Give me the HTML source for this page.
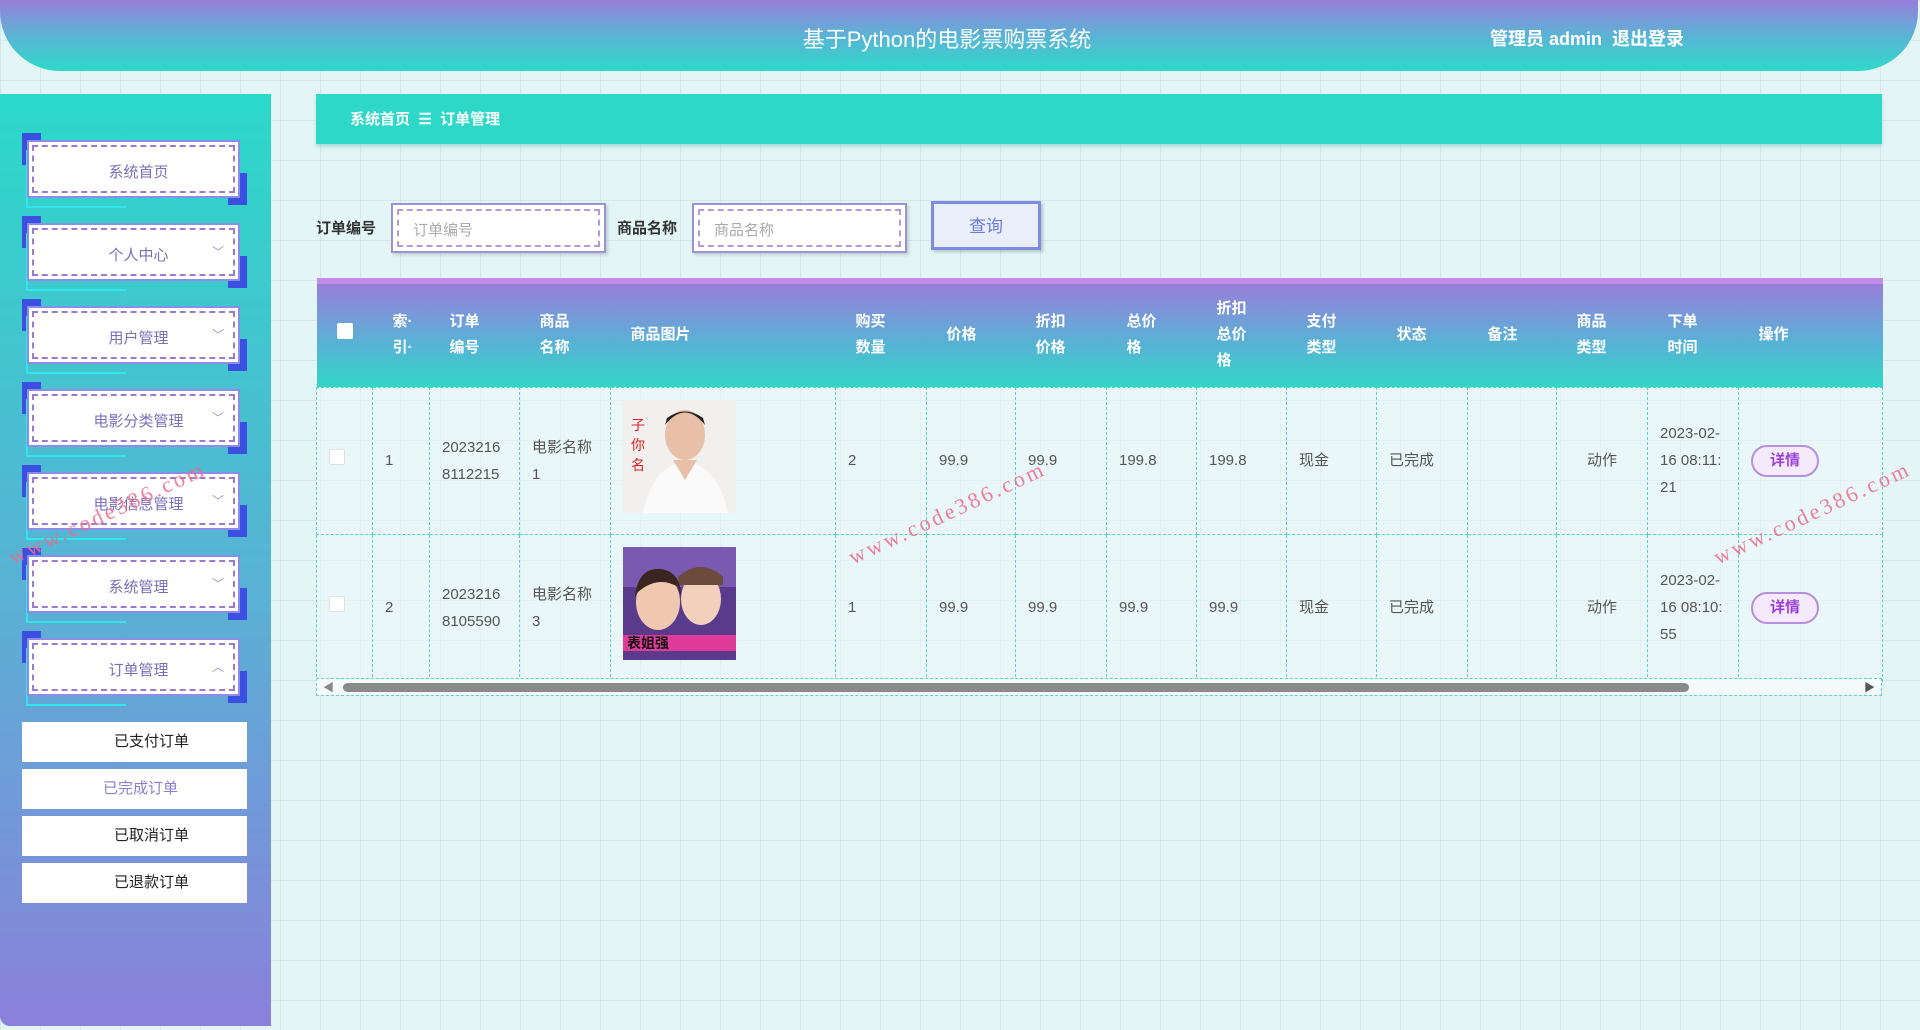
<!DOCTYPE html>
<html><head><meta charset="utf-8">
<style>
*{margin:0;padding:0;box-sizing:border-box}
body{width:1920px;height:1030px;overflow:hidden;font-family:"Liberation Sans","Noto Sans CJK SC",sans-serif;
background:#e3f5f5;
background-image:linear-gradient(rgba(180,210,215,.35) 1px,transparent 1px),linear-gradient(90deg,rgba(180,210,215,.35) 1px,transparent 1px);
background-size:40px 40px;position:relative}
.hdr{position:absolute;left:0;top:0;width:1918px;height:71px;border-radius:0 0 60px 60px;
background:linear-gradient(180deg,#9a7edb 0%,#5bb3d6 50%,#2fd9c9 100%)}
.hdr .t{position:absolute;left:0;width:1894px;text-align:center;top:22px;color:#fff;font-size:22px}
.hdr .u{position:absolute;left:1490px;top:25px;color:#fff;font-size:18px;font-weight:bold}
.side{position:absolute;left:0;top:94px;width:271px;height:932px;background:linear-gradient(180deg,#2bd9c9 0%,#5ab0d5 55%,#8b80db 100%);border-radius:0 0 0 10px}
.mi{position:absolute;left:27px;width:213px;height:58px;background:#fff;border:2px solid #8b8de8}
.mi:after{content:"";position:absolute;left:3px;top:3px;right:3px;bottom:3px;border:2px dashed #9a7ccf}
.mi span{position:absolute;left:10px;right:0;top:19px;text-align:center;color:#7b6fb8;font-size:15px}
.mi i{position:absolute;right:14px;top:18px;color:#9a8fc8;font-style:normal;font-size:12px}
.ca{position:absolute;width:19px;height:32px;background:#3b4fe0}
.cl{position:absolute;border:2px solid #33e6ee}
.sub{position:absolute;left:22px;width:225px;height:40px;background:#fff;text-align:center;line-height:40px;font-size:15px;color:#222}
.bc{position:absolute;left:316px;top:94px;width:1566px;height:50px;background:#2dd8c8;box-shadow:0 3px 3px rgba(120,200,200,.5);color:#fff;font-size:15px;font-weight:bold;line-height:52px;padding-left:34px}
.lbl{position:absolute;top:217px;font-size:15px;color:#333;font-weight:bold}
.inp{position:absolute;top:203px;width:215px;height:50px;background:#fff;border:2px solid #9b92d8;box-shadow:2px 2px 3px rgba(0,0,0,.15)}
.inp:after{content:"";position:absolute;left:4px;top:4px;right:4px;bottom:4px;border:2px dashed #b49ad8}
.inp span{position:absolute;left:20px;top:14px;color:#aaa;font-size:15px}
.btn{position:absolute;left:931px;top:201px;width:110px;height:49px;background:#e8eefa;border:3px solid #7d8ce0;color:#6d7bd8;font-size:17px;text-align:center;line-height:45px;box-shadow:2px 2px 3px rgba(0,0,0,.2)}
table{position:absolute;left:316px;top:278px;border-collapse:collapse;table-layout:fixed;width:1566px}
th{height:106px;color:#fff;font-size:15px;font-weight:bold;line-height:26px;text-align:left;padding-left:20px;background:linear-gradient(180deg,#9a7edb,#5bb0d6 55%,#30d6c9);border-top:6px solid #c18de8}
td{height:147px;border:1px dashed #5fd0c8;font-size:15px;color:#555;padding-left:12px;line-height:27px;background:rgba(240,250,252,.5)}
.cb{display:inline-block;width:16px;height:16px;background:#fff;border-radius:2px;border:1px solid #e0e0e0}
.img{width:113px;height:113px}
.dt{display:inline-block;width:68px;height:32px;border:2px solid #b590de;border-radius:16px;background:#f4eafc;color:#9a3fd8;font-weight:bold;text-align:center;line-height:28px}
.sb{position:absolute;left:316px;top:678px;width:1566px;height:18px;border:1px dashed #5fd0c8;background:#f5fbfb}
.sb .th{position:absolute;left:26px;top:4px;width:1346px;height:9px;border-radius:5px;background:#8a8a8a}
.wm{position:absolute;color:#f06a8a;font-family:"Liberation Serif",serif;font-size:22px;transform:rotate(-25deg);letter-spacing:3px;white-space:nowrap;opacity:.85}
</style></head><body>
<div class="hdr"><div class="t">基于Python的电影票购票系统</div><div class="u">管理员 admin &nbsp;退出登录</div></div>
<div class="side"></div>

<div class="ca" style="left:22px;top:133px"></div><div class="ca" style="left:228px;top:173px"></div><div class="cl" style="left:26px;top:150px;width:100px;height:58px;border-top:none;border-right:none"></div><div class="mi" style="top:140px"><span>系统首页</span></div>
<div class="ca" style="left:22px;top:216px"></div><div class="ca" style="left:228px;top:256px"></div><div class="cl" style="left:26px;top:233px;width:100px;height:58px;border-top:none;border-right:none"></div><div class="mi" style="top:223px"><span>个人中心</span><i>﹀</i></div>
<div class="ca" style="left:22px;top:299px"></div><div class="ca" style="left:228px;top:339px"></div><div class="cl" style="left:26px;top:316px;width:100px;height:58px;border-top:none;border-right:none"></div><div class="mi" style="top:306px"><span>用户管理</span><i>﹀</i></div>
<div class="ca" style="left:22px;top:382px"></div><div class="ca" style="left:228px;top:422px"></div><div class="cl" style="left:26px;top:399px;width:100px;height:58px;border-top:none;border-right:none"></div><div class="mi" style="top:389px"><span>电影分类管理</span><i>﹀</i></div>
<div class="ca" style="left:22px;top:465px"></div><div class="ca" style="left:228px;top:505px"></div><div class="cl" style="left:26px;top:482px;width:100px;height:58px;border-top:none;border-right:none"></div><div class="mi" style="top:472px"><span>电影信息管理</span><i>﹀</i></div>
<div class="ca" style="left:22px;top:548px"></div><div class="ca" style="left:228px;top:588px"></div><div class="cl" style="left:26px;top:565px;width:100px;height:58px;border-top:none;border-right:none"></div><div class="mi" style="top:555px"><span>系统管理</span><i>﹀</i></div>
<div class="ca" style="left:22px;top:631px"></div><div class="ca" style="left:228px;top:671px"></div><div class="cl" style="left:26px;top:648px;width:100px;height:58px;border-top:none;border-right:none"></div><div class="mi" style="top:638px"><span>订单管理</span><i>︿</i></div>
<div class="sub" style="top:722px;padding-left:34px">已支付订单</div>
<div class="sub" style="top:769px;color:#8a7fcf;padding-left:12px">已完成订单</div>
<div class="sub" style="top:816px;padding-left:34px">已取消订单</div>
<div class="sub" style="top:863px;padding-left:34px">已退款订单</div>

<div class="bc">系统首页 &nbsp;☰ &nbsp;订单管理</div>
<div class="lbl" style="left:316px">订单编号</div>
<div class="inp" style="left:391px"><span>订单编号</span></div>
<div class="lbl" style="left:617px">商品名称</div>
<div class="inp" style="left:692px"><span>商品名称</span></div>
<div class="btn">查询</div>

<table>
<colgroup><col style="width:56px"><col style="width:57px"><col style="width:90px"><col style="width:91px"><col style="width:225px"><col style="width:91px"><col style="width:89px"><col style="width:91px"><col style="width:90px"><col style="width:90px"><col style="width:90px"><col style="width:91px"><col style="width:89px"><col style="width:91px"><col style="width:91px"><col style="width:144px"></colgroup>
<tr><th><span class="cb" style="border:none"></span></th><th>索·<br>引·</th><th>订单<br>编号</th><th>商品<br>名称</th><th>商品图片</th><th>购买<br>数量</th><th>价格</th><th>折扣<br>价格</th><th>总价<br>格</th><th>折扣<br>总价<br>格</th><th>支付<br>类型</th><th>状态</th><th>备注</th><th>商品<br>类型</th><th>下单<br>时间</th><th>操作</th></tr>
<tr><td><span class="cb"></span></td><td>1</td><td>2023216<br>8112215</td><td>电影名称<br>1</td><td><svg class="img" viewBox="0 0 113 113"><rect width="113" height="113" fill="#f2f0ee"/><ellipse cx="62" cy="35" rx="20" ry="25" fill="#e8c0a8"/><path d="M42 25 Q62 0 82 25 L80 18 Q62 5 44 18Z" fill="#222"/><path d="M20 113 Q30 65 62 62 Q95 65 105 113Z" fill="#fafafa"/><path d="M50 60 L62 80 L74 60" fill="#e8c0a8"/><text x="8" y="30" fill="#d22" font-size="14">子</text><text x="8" y="50" fill="#d22" font-size="14">你</text><text x="8" y="70" fill="#d22" font-size="14">名</text></svg></td><td>2</td><td>99.9</td><td>99.9</td><td>199.8</td><td>199.8</td><td>现金</td><td>已完成</td><td></td><td style="padding-left:30px">动作</td><td>2023-02-<br>16 08:11:<br>21</td><td><span class="dt">详情</span></td></tr>
<tr><td><span class="cb"></span></td><td>2</td><td>2023216<br>8105590</td><td>电影名称<br>3</td><td><svg class="img" viewBox="0 0 113 113"><rect width="113" height="113" fill="#5a3a8a"/><rect width="113" height="40" fill="#7a5ab0"/><ellipse cx="35" cy="55" rx="22" ry="28" fill="#f0c8b0"/><ellipse cx="78" cy="52" rx="20" ry="26" fill="#f2d0bc"/><path d="M55 30 Q78 10 100 30 L100 38 L56 38Z" fill="#6a4a3a"/><path d="M12 50 Q15 20 38 22 Q58 25 58 50 L55 40 Q35 28 15 45Z" fill="#3a2520"/><rect y="88" width="113" height="16" fill="#e03a9a"/><text x="4" y="101" fill="#111" font-size="14" font-weight="bold">表姐强</text></svg></td><td>1</td><td>99.9</td><td>99.9</td><td>99.9</td><td>99.9</td><td>现金</td><td>已完成</td><td></td><td style="padding-left:30px">动作</td><td>2023-02-<br>16 08:10:<br>55</td><td><span class="dt">详情</span></td></tr>
</table>
<div class="sb"><span style="position:absolute;left:6px;top:0;font-size:11px;color:#888">◀</span><div class="th"></div><span style="position:absolute;right:6px;top:0;font-size:11px;color:#555">▶</span></div>

<div class="wm" style="left:0px;top:500px">www.code386.com</div>
<div class="wm" style="left:840px;top:500px">www.code386.com</div>
<div class="wm" style="left:1705px;top:500px">www.code386.com</div>
</body></html>
